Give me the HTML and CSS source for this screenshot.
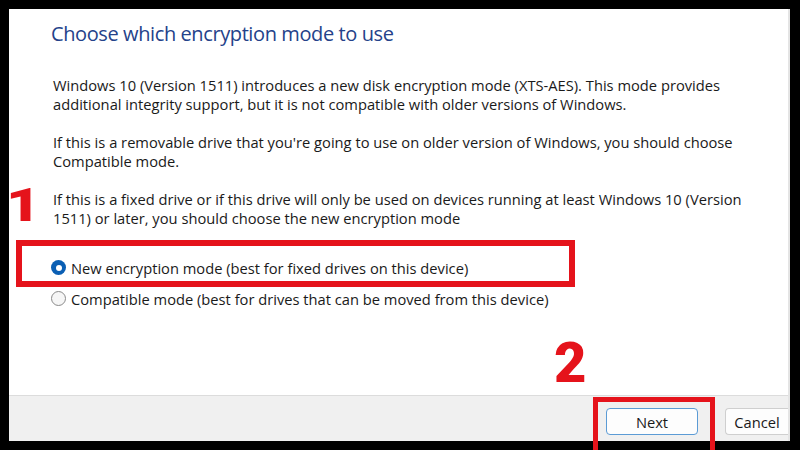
FILE: index.html
```html
<!DOCTYPE html>
<html lang="en">
<head>
<meta charset="utf-8">
<title>Choose which encryption mode to use</title>
<link rel="stylesheet" href="styles.css">
</head>
<body>
<div class="screen">
  <div class="dialog">
    <div class="content">
      <h1 class="title">Choose which encryption mode to use</h1>
      <p class="para">Windows 10 (Version 1511) introduces a new disk encryption mode (XTS-AES). This mode provides additional integrity support, but it is not compatible with older versions of Windows.</p>
      <p class="para">If this is a removable drive that you're going to use on older version of Windows, you should choose Compatible mode.</p>
      <p class="para">If this is a fixed drive or if this drive will only be used on devices running at least Windows 10 (Version 1511) or later, you should choose the new encryption mode</p>
      <div class="options">
        <div class="option"><span class="radio checked"></span><span class="label">New encryption mode (best for fixed drives on this device)</span></div>
        <div class="option"><span class="radio"></span><span class="label">Compatible mode (best for drives that can be moved from this device)</span></div>
      </div>
    </div>
    <div class="footer">
      <button class="btn next">Next</button>
      <button class="btn cancel">Cancel</button>
    </div>
  </div>
  <div class="mark mark-one">1</div>
  <div class="mark mark-two">2</div>
  <div class="box box-one"></div>
  <div class="box box-two"></div>
</div>
</body>
</html>
```

FILE: styles.css
```css
html, body {
  margin: 0;
  padding: 0;
  background: #000;
}

.screen {
  position: relative;
  width: 800px;
  height: 450px;
  overflow: hidden;
  background: #000;
  padding: 9px 10px 9px 9px;
  box-sizing: border-box;
}

.dialog {
  width: 781px;
  height: 432px;
  background: #fff;
  display: flex;
  flex-direction: column;
  overflow: hidden;
  box-sizing: border-box;
  border-right: 2px solid #e4e4e4;
  font-family: "Open Sans", "Noto Sans", sans-serif;
  color: #1a1a1a;
}

.content {
  flex: 1;
  padding: 11px 0 0 42px;
}

.title {
  margin: 0;
  font-size: 20px;
  line-height: 28px;
  font-weight: 400;
  color: #24428a;
  letter-spacing: -0.4px;
}

.para {
  margin: 28px 0 0 2px;
  font-size: 14.7px;
  line-height: 19px;
  width: 700px;
}

.para + .para {
  margin-top: 19px;
}

.options {
  margin-top: 24px;
  display: flex;
  flex-direction: column;
}

.option {
  height: 31px;
  display: flex;
  align-items: center;
  gap: 5px;
  font-size: 14.7px;
}

.radio {
  width: 15px;
  height: 15px;
  border-radius: 50%;
  box-sizing: border-box;
  border: 1px solid #8a8a8a;
  background: #f6f6f6;
  display: flex;
  align-items: center;
  justify-content: center;
  flex: none;
}

.radio.checked {
  border: none;
  background: #0a5fb4;
}

.radio.checked::after {
  content: "";
  width: 6px;
  height: 6px;
  border-radius: 50%;
  background: #fff;
}

.footer {
  height: 46px;
  box-sizing: border-box;
  background: #f0f0f0;
  border-top: 1px solid #dcdcdc;
  display: flex;
  justify-content: flex-end;
  align-items: flex-start;
  gap: 27px;
  padding-top: 12px;
}

.btn {
  height: 27px;
  box-sizing: border-box;
  font-family: "Open Sans", "Noto Sans", sans-serif;
  font-size: 14.7px;
  color: #1a1a1a;
  background: #fdfdfd;
  border-radius: 4px;
  padding: 0;
}

.next {
  width: 92px;
  border: 1px solid #5b9bd5;
}

.cancel {
  width: 63px;
  border: 1px solid #cfcfcf;
  border-right: none;
  border-radius: 4px 0 0 4px;
}

.mark {
  position: absolute;
  font-family: Roboto, "DejaVu Sans", sans-serif;
  font-weight: 900;
  color: #e5131b;
  line-height: 1;
}

.mark-one {
  left: 6px;
  top: 182px;
  font-size: 46px;
  transform: scaleX(1.3);
  transform-origin: left top;
}

.mark-two {
  left: 554px;
  top: 335px;
  font-size: 56px;
}

.box {
  position: absolute;
  border: 6px solid #e5131b;
  box-sizing: border-box;
}

.box-one {
  left: 16px;
  top: 240px;
  width: 559px;
  height: 47px;
}

.box-two {
  left: 593px;
  top: 397px;
  width: 122px;
  height: 70px;
  border-width: 5px;
}
```
